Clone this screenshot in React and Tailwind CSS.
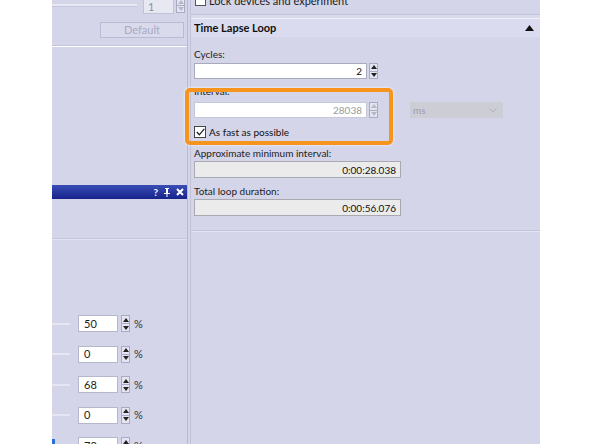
import React from "react";

function Spin({ disabled = false, h = 16 }) {
  const c = disabled ? "#b8b8c4" : "#222";
  return (
    <div className="flex flex-col w-[9px] border border-[#a9abc4] bg-[#e4e5f0]" style={{ height: h }}>
      <div className="flex-1 flex items-center justify-center border-b border-[#a9abc4]">
        <svg width="6" height="4" viewBox="0 0 6 4"><path d="M0 4 L3 0 L6 4Z" fill={c} /></svg>
      </div>
      <div className="flex-1 flex items-center justify-center">
        <svg width="6" height="4" viewBox="0 0 6 4"><path d="M0 0 L3 4 L6 0Z" fill={c} /></svg>
      </div>
    </div>
  );
}

function PctRow({ value, marker = false }) {
  return (
    <div className="flex items-center h-[17px]">
      <div className="relative w-[18px] h-[17px] flex items-center">
        <div className="w-full h-[2px] bg-[#e6e7f2]" />
        {marker && <div className="absolute left-0 top-[2px] w-[3px] h-[15px] bg-[#2a6fd6]" />}
      </div>
      <div className="ml-[8px] w-[40px] h-[17px] bg-white border border-[#b5b7cc] flex items-center pl-[5px] text-[#222] text-[11px]">
        {value}
      </div>
      <div className="ml-[3px]"><Spin h={17} /></div>
      <span className="ml-[4px] text-[#333] text-[11px]">%</span>
    </div>
  );
}

export default function App() {
  return (
    <div className="w-[592px] h-[444px] bg-white flex overflow-hidden font-['Lato',sans-serif] text-[10px] leading-[14px]">
      <div className="ml-[52px] w-[488px] h-full bg-[#d4d5e9] flex overflow-hidden">
        {/* Left panel */}
        <div className="w-[136px] h-full border-r border-[#b7b9d4] flex flex-col shrink-0">
          <div className="flex items-start h-[14px]">
            <div className="w-[85px] h-[10px] flex items-center">
              <div className="w-full h-[3px] bg-[#e8e9f3] border-b border-[#c4c6dc]" />
            </div>
            <div className="ml-[6px] w-[31px] h-[14px] bg-[#e7e8f1] border-x border-b border-[#c0c2d6] flex items-center pl-[4px] text-[#8d8fa6] text-[11px] leading-[12px]">1</div>
            <div className="ml-[2px] -mt-[2px]"><Spin disabled h={15} /></div>
          </div>
          <div className="mt-[8px] ml-[48px] w-[84px] h-[19px] border border-[#b9bbd6] bg-[#d9daec] flex items-center justify-center text-[#a8aac6] text-[11px]">Default</div>
          <div className="mt-[7px] border-t border-[#c3c5dd] border-b-white border-b h-[2px]" />
          <div className="mt-[138px] h-[19px] bg-linear-to-b from-[#3a4db6] to-[#16238a] flex items-center justify-end pr-[3px] gap-[5px] text-white font-bold text-[10px]">
            <span>?</span>
            <svg width="8" height="9" viewBox="0 0 8 9"><path d="M2 0h4v1H5v4h2v1H1V5h2V1H2z M3.5 6h1v3h-1z" fill="white" /></svg>
            <svg width="8" height="8" viewBox="0 0 8 8"><path d="M1 1L7 7M7 1L1 7" stroke="white" strokeWidth="2" /></svg>
          </div>
          <div className="mt-[39px] border-t border-[#c3c5dd] border-b border-b-[#e2e3f0] h-[2px]" />
          <div className="mt-[75px] flex flex-col gap-[13.5px]">
            <PctRow value="50" />
            <PctRow value="0" />
            <PctRow value="68" />
            <PctRow value="0" />
            <PctRow value="70" marker />
          </div>
        </div>
        <div className="w-[2px] shrink-0" />
        {/* Right panel */}
        <div className="w-[350px] h-full border-l border-[#c0c2da] flex flex-col relative">
          <div className="h-[14px] flex items-start pl-[4px] overflow-hidden">
            <div className="flex items-center -mt-[6px]">
              <div className="w-[11px] h-[11px] bg-white border border-[#555]" />
              <span className="ml-[3px] text-[#222] text-[11px] leading-[13px]">Lock devices and experiment</span>
            </div>
          </div>
          <div className="h-[5px] border-t border-[#c1c3db] border-b border-b-[#f0f0f8] bg-[#d9daec]" />
          <div className="h-[18px] bg-[#dadbee] flex items-center justify-between pl-[3px] pr-[6px]">
            <span className="font-bold text-[11px] text-[#111]">Time Lapse Loop</span>
            <svg width="9" height="6" viewBox="0 0 9 6"><path d="M0 6 L4.5 0 L9 6Z" fill="#111" /></svg>
          </div>
          <div className="pl-[3px] flex flex-col">
            <div className="mt-[10px] text-[#222]">Cycles:</div>
            <div className="mt-[2px] flex items-center">
              <div className="w-[173px] h-[16px] bg-white border border-[#a9abbd] flex items-center justify-end pr-[4px] text-[#111]">2</div>
              <div className="ml-[2px]"><Spin h={16} /></div>
            </div>
            <div className="mt-[5px] text-[#222]">Interval:</div>
            <div className="mt-[4px] flex items-center">
              <div className="w-[173px] h-[16px] bg-white border border-[#c6c8d8] flex items-center justify-end pr-[4px] text-[#9a9a9a]">28038</div>
              <div className="ml-[2px]"><Spin disabled h={16} /></div>
              <div className="ml-[32px] w-[93px] h-[16px] bg-[#cdcdd6] flex items-center justify-between pl-[3px] pr-[6px] text-[#9c9cae]">
                <span>ms</span>
                <svg width="8" height="5" viewBox="0 0 8 5"><path d="M0.5 0.5 L4 4 L7.5 0.5" stroke="#b0b0c0" fill="none" /></svg>
              </div>
            </div>
            <div className="mt-[7px] flex items-center h-[14px]">
              <div className="w-[12px] h-[12px] bg-white border border-[#444] flex items-center justify-center">
                <svg width="9" height="8" viewBox="0 0 9 8"><path d="M0.8 4 L3.3 6.8 L8.3 0.8" stroke="#222" strokeWidth="1.3" fill="none" /></svg>
              </div>
              <span className="ml-[3px] text-[#111]">As fast as possible</span>
            </div>
            <div className="mt-[7px] text-[#222]">Approximate minimum interval:</div>
            <div className="mt-[1px] w-[207px] h-[17px] bg-[#ebebeb] border border-[#a9a9b2] flex items-center justify-end pr-[4px] text-[#111]">0:00:28.038</div>
            <div className="mt-[6px] text-[#222]">Total loop duration:</div>
            <div className="mt-[1px] w-[207px] h-[17px] bg-[#ebebeb] border border-[#a9a9b2] flex items-center justify-end pr-[4px] text-[#111]">0:00:56.076</div>
          </div>
          <div className="mt-[14px] border-t border-[#c1c3db] border-b border-b-[#e4e5f1] h-[2px]" />
          {/* annotation highlight */}
          <div className="absolute left-[-6px] top-[88px] w-[208px] h-[57px] rounded-[5px] border-[4px] border-[#f7941d] shadow-[0_0_3px_rgba(255,255,255,0.9)]" />
        </div>
      </div>
    </div>
  );
}
